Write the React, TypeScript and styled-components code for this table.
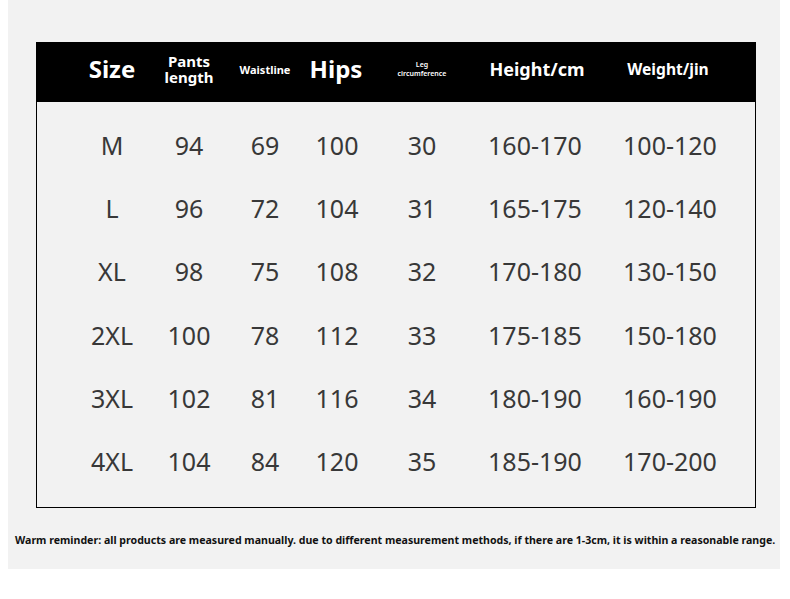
import React from "react";
import styled, { createGlobalStyle } from "styled-components";

const GlobalStyle = createGlobalStyle`
  html, body { margin: 0; padding: 0; background: #ffffff; }
  body { font-family: "Noto Sans", "Open Sans", sans-serif; }
`;

const COLS = "76px 78px 74px 70px 100px 126px 144px";

const Panel = styled.div`
  width: 772px;
  height: 569px;
  margin-left: 8px;
  background: #f2f2f2;
  padding-top: 42px;
  box-sizing: border-box;
  display: flex;
  flex-direction: column;
`;

const Table = styled.div`
  margin-left: 28px;
  width: 720px;
  height: 466px;
  border: 1px solid #000;
  box-sizing: border-box;
  display: flex;
  flex-direction: column;
`;

const HeaderRow = styled.div`
  display: grid;
  grid-template-columns: ${COLS};
  height: 60px;
  padding: 0 0 5px 37px;
  box-sizing: border-box;
  background: #000;
  color: #fff;
  align-items: center;
  margin: -1px -1px 0 -1px;
`;

const HeadCell = styled.div<{ $size: number; $lh?: number; $weight?: number; $dx?: number }>`
  text-align: center;
  font-weight: ${(p) => p.$weight ?? 700};
  font-size: ${(p) => p.$size}px;
  line-height: ${(p) => p.$lh ?? 1.2};
  white-space: nowrap;
  transform: translateX(${(p) => p.$dx ?? 0}px);
`;

const Body = styled.div`
  padding: 12px 0 0 37px;
  display: flex;
  flex-direction: column;
`;

const Row = styled.div`
  display: grid;
  grid-template-columns: ${COLS};
  height: 63.2px;
  align-items: center;
`;

const Cell = styled.div`
  text-align: center;
  font-size: 25px;
  font-weight: 400;
  color: #383838;
  line-height: 1;
  white-space: nowrap;
`;

const Footer = styled.div`
  margin-top: 25px;
  padding-left: 7px;
  font-size: 10.6px;
  font-weight: 700;
  color: #111;
  white-space: nowrap;
`;

const rows = [
  ["M", "94", "69", "100", "30", "160-170", "100-120"],
  ["L", "96", "72", "104", "31", "165-175", "120-140"],
  ["XL", "98", "75", "108", "32", "170-180", "130-150"],
  ["2XL", "100", "78", "112", "33", "175-185", "150-180"],
  ["3XL", "102", "81", "116", "34", "180-190", "160-190"],
  ["4XL", "104", "84", "120", "35", "185-190", "170-200"],
];

export default function App() {
  return (
    <>
      <GlobalStyle />
      <Panel>
        <Table>
          <HeaderRow>
            <HeadCell $size={24} $dx={1}>Size</HeadCell>
            <HeadCell $size={15} $lh={1.05} $dx={1}>
              Pants
              <br />
              length
            </HeadCell>
            <HeadCell $size={11} $dx={1}>Waistline</HeadCell>
            <HeadCell $size={24}>Hips</HeadCell>
            <HeadCell $size={7} $lh={1.15} $weight={600} $dx={1}>
              Leg
              <br />
              circumference
            </HeadCell>
            <HeadCell $size={18} $dx={3}>Height/cm</HeadCell>
            <HeadCell $size={15.6} $dx={-1}>Weight/jin</HeadCell>
          </HeaderRow>
          <Body>
            {rows.map((r) => (
              <Row key={r[0]}>
                {r.map((v, i) => (
                  <Cell key={i}>{v}</Cell>
                ))}
              </Row>
            ))}
          </Body>
        </Table>
        <Footer>
          Warm reminder: all products are measured manually. due to different measurement methods, if there are 1-3cm, it is within a reasonable range.
        </Footer>
      </Panel>
    </>
  );
}
